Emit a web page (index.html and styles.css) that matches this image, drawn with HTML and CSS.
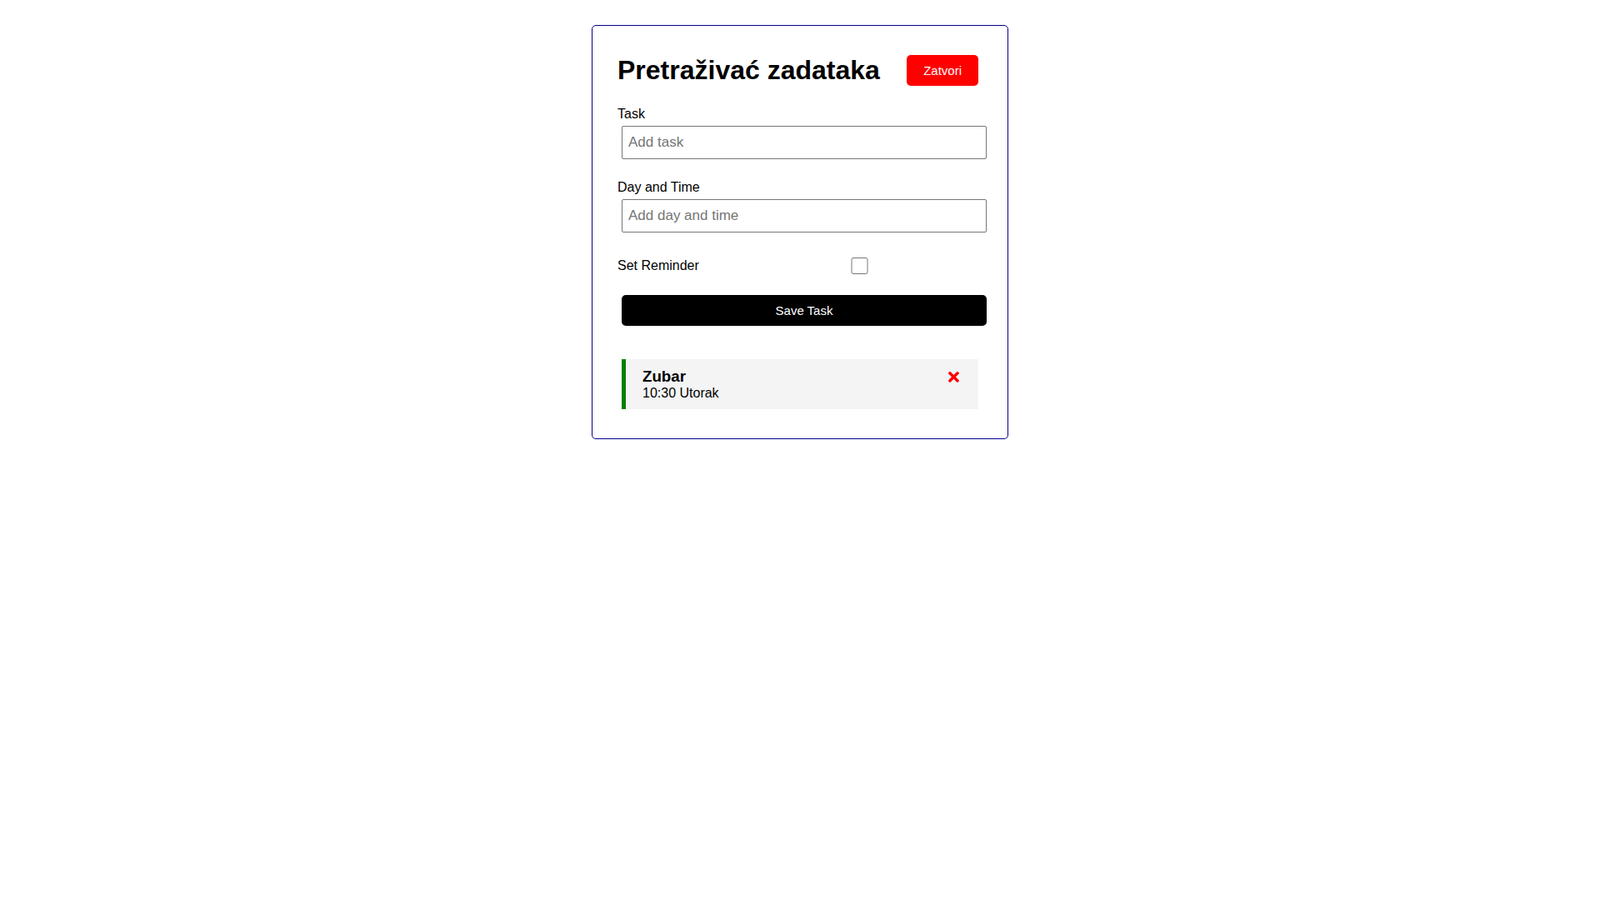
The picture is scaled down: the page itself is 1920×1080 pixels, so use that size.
FILE: index.html
```html
<!DOCTYPE html>
<html lang="en">
<head>
    <meta charset="UTF-8">
    <title>Task Tracker</title>
    <link rel="stylesheet" href="styles.css">
</head>
<body>
	<div class="container">
		<header class="header">
			<h1>Pretraživać zadataka</h1>
			<button class="btn btn-red">Zatvori</button>
		</header>
		<form class="add-form">
			<div class="form-control">
				<label>Task</label>
				<input type="text" placeholder="Add task">
			</div>
			<div class="form-control">
				<label>Day and Time</label>
				<input type="text" placeholder="Add day and time">
			</div>
			<div class="form-control form-control-check">
				<label>Set Reminder</label>
				<input type="checkbox">
			</div>
			<input type="submit" value="Save Task" class="btn btn-block">
		</form>
		<div class="task reminder">
			<h3>Zubar
				<svg class="del" viewBox="0 0 352 512" width="12.87" height="18.72"><path fill="red" d="M242.72 256l100.07-100.07c12.28-12.28 12.28-32.19 0-44.48l-22.24-22.24c-12.28-12.28-32.19-12.28-44.48 0L176 189.28 75.93 89.21c-12.28-12.28-32.19-12.28-44.48 0L9.21 111.450c-12.28 12.28-12.28 32.19 0 44.48L109.28 256 9.21 356.07c-12.28 12.28-12.28 32.19 0 44.48l22.24 22.24c12.28 12.28 32.2 12.28 44.48 0L176 322.72l100.07 100.07c12.28 12.28 32.2 12.28 44.48 0l22.24-22.24c12.28-12.28 12.28-32.19 0-44.48L242.72 256z"/></svg>
			</h3>
			<p>10:30 Utorak</p>
		</div>
	</div>
</body>
</html>
```

FILE: styles.css
```css
* {
	box-sizing: border-box;
	margin: 0;
	padding: 0;
}
body {
	font-family: "Liberation Sans", Arial, sans-serif;
	background: #fff;
}
.container {
	max-width: 500px;
	margin: 30px auto;
	overflow: auto;
	min-height: 300px;
	border: 1px solid darkblue;
	padding: 30px;
	border-radius: 5px;
}
.header {
	display: flex;
	justify-content: space-between;
	align-items: center;
	margin-bottom: 20px;
}
h1 {
	font-size: 32px;
}
.btn {
	display: inline-block;
	background: #000;
	color: #fff;
	border: none;
	padding: 10px 20px;
	margin: 5px;
	border-radius: 5px;
	cursor: pointer;
	font-size: 15px;
	font-family: inherit;
}
.btn-red {
	background: red;
}
.btn-block {
	display: block;
	width: 100%;
}
.add-form {
	margin-bottom: 40px;
}
.form-control {
	margin: 20px 0;
}
.form-control label {
	display: block;
	font-size: 16px;
}
.form-control input {
	width: 100%;
	height: 40px;
	margin: 5px;
	padding: 3px 7px;
	font-size: 17px;
	font-family: inherit;
	border: 1px solid #767676;
	border-radius: 2px;
}
.form-control input::placeholder {
	color: #757575;
}
.form-control-check {
	display: flex;
	align-items: center;
	justify-content: space-between;
}
.form-control-check label {
	flex: 1;
}
.form-control-check input {
	flex: 2;
	height: 20px;
}
.task {
	background: #f4f4f4;
	margin: 5px;
	padding: 10px 20px;
	cursor: pointer;
}
.task.reminder {
	border-left: 5px solid green;
}
.task h3 {
	display: flex;
	align-items: center;
	justify-content: space-between;
	font-size: 18.72px;
}
.task p {
	font-size: 16px;
}
.del {
	margin-right: 3px;
	cursor: pointer;
}
```
